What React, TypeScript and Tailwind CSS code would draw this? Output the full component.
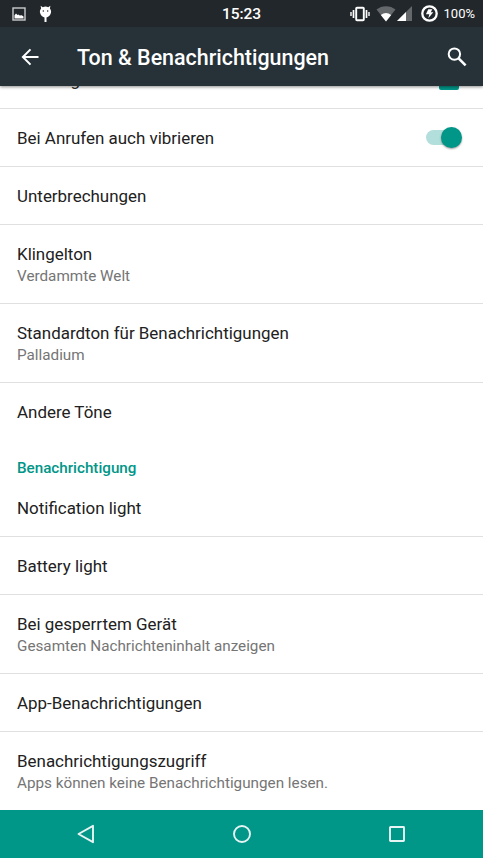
import React, { PropsWithChildren } from "react";
import clsx from "clsx";

function StatusBar() {
  return (
    <div className="grid h-[27px] grid-cols-3 items-center bg-[#22272b] text-white">
      <div className="flex items-center gap-[13px] pl-3">
        <svg width="14" height="14" viewBox="0 0 14 14">
          <rect x="1" y="1" width="12" height="12" fill="none" stroke="#c9cbcc" strokeWidth="1.4" />
          <path d="M2.5 11.5V8.2l1.5-1.7 1.5 1.6 1-.5 1.2 1 2-.4 1.8 1.3v2z" fill="#fff" />
        </svg>
        <svg width="13" height="18" viewBox="0 0 13 18">
          <path
            d="M1.6.8l2.2 1.4a6 6 0 0 1 5.4 0L11.4.8l-.5 2.6c1 1.2 1.4 2.5 1.1 4-.4 2.6-2.2 4.5-4.5 5V17h-2v-4.6C3.2 11.9 1.4 10 1 7.4c-.3-1.5.1-2.8 1.1-4z"
            fill="#fff"
          />
          <circle cx="4.3" cy="6" r=".75" fill="#22272b" />
          <circle cx="8.7" cy="6" r=".75" fill="#22272b" />
        </svg>
      </div>
      <div className="pt-[2px] text-center text-[15.5px] leading-none font-medium tracking-[-0.1px]">15:23</div>
      <div className="flex items-center justify-end pr-2">
        <svg width="20" height="16" viewBox="0 0 20 16" fill="none" stroke="#fff">
          <rect x="6.2" y="1.8" width="7.6" height="12.4" rx=".8" strokeWidth="1.9" />
          <path d="M3.5 4v8M16.5 4v8" strokeWidth="1.7" />
          <path d="M1 6v4M19 6v4" strokeWidth="1.4" />
        </svg>
        <svg className="ml-[6px]" width="20" height="16" viewBox="0 0 20 16">
          <path d="M.5 3.6a15 15 0 0 1 19 0L10 15.5z" fill="#64686b" />
          <path d="M4.8 8.9a8.5 8.5 0 0 1 10.4 0L10 15.5z" fill="#fff" />
        </svg>
        <svg className="ml-px" width="15" height="15" viewBox="0 0 15 15">
          <path d="M15 0v15H0z" fill="#64686b" />
          <path d="M9 6v9H0z" fill="#fff" />
        </svg>
        <svg className="ml-[9px]" width="17" height="17" viewBox="0 0 17 17">
          <circle cx="8.5" cy="8.5" r="7.2" fill="none" stroke="#fff" strokeWidth="2.3" />
          <path d="M7.3 4.2h4L9.8 7.2h2.5l-5 6 1-3.9H4.9z" fill="#fff" />
        </svg>
        <span className="ml-1.5 text-[13px] leading-none">100%</span>
      </div>
    </div>
  );
}

function AppBar() {
  return (
    <div className="flex h-[59px] items-center bg-[#263238] text-white">
      <svg className="ml-[21px]" width="18" height="18" viewBox="0 0 18 18" fill="none" stroke="#fff" strokeWidth="2">
        <path d="M17.5 9H2M9.5 1.4L1.9 9l7.6 7.6" />
      </svg>
      <h1 className="ml-[38px] flex-1 pt-[3px] text-[21.45px] leading-none font-medium">
        Ton &amp; Benachrichtigungen
      </h1>
      <svg className="mr-4" width="20" height="20" viewBox="0 0 20 20" fill="none" stroke="#fff">
        <circle cx="7.4" cy="7.1" r="5.7" strokeWidth="2" />
        <path d="M11.6 11.3l7 7" strokeWidth="2.5" />
      </svg>
    </div>
  );
}

function Toggle() {
  return (
    <div className="relative mt-[-1px] mr-[5px] h-[15px] w-[35px] rounded-full bg-[#b2dfdb]">
      <div className="absolute -top-[3px] -right-px size-[21px] rounded-full bg-[#009688] shadow-[0_1px_2px_rgba(0,0,0,0.4)]" />
    </div>
  );
}

type RowProps = PropsWithChildren<{
  title: string;
  summary?: string;
  last?: boolean;
}>;

function Row({ title, summary, last, children }: RowProps) {
  return (
    <div
      className={clsx(
        "flex shrink-0 items-center justify-between px-[17px]",
        summary ? "h-[79px] pt-px" : "h-[58px]",
        !last && "border-b border-[#e0e0e0]",
      )}
    >
      <div>
        <div className="text-[16.95px] leading-[22px] text-[#212121]">{title}</div>
        {summary && (
          <div className="text-[15.25px] leading-[22px] text-[#757575]">{summary}</div>
        )}
      </div>
      {children}
    </div>
  );
}

function NavBar() {
  return (
    <div className="flex h-12 items-center justify-between bg-[#009688] px-[76px]">
      <svg width="20" height="20" viewBox="0 0 20 20" fill="none" stroke="#e6f4f3" strokeWidth="1.9">
        <path d="M17 1.8v16.4L2.5 10z" strokeLinejoin="round" />
      </svg>
      <svg width="20" height="20" viewBox="0 0 20 20" fill="none" stroke="#e6f4f3" strokeWidth="1.9">
        <circle cx="10" cy="10" r="8" />
      </svg>
      <svg width="20" height="20" viewBox="0 0 20 20" fill="none" stroke="#e6f4f3" strokeWidth="1.9">
        <rect x="3" y="3" width="14" height="14" rx=".5" />
      </svg>
    </div>
  );
}

export default function App() {
  return (
    <div className="flex h-[858px] w-[483px] flex-col overflow-hidden bg-white font-['Roboto',sans-serif]">
      <div className="relative z-10 shadow-[0_1px_3px_rgba(0,0,0,0.45)]">
        <StatusBar />
        <AppBar />
      </div>
      <div className="flex-1 overflow-hidden">
        {/* list is scrolled by 35px, the first row is mostly under the app bar */}
        <div className="-mt-[35px] flex flex-col">
          <Row title="Aufsteigend">
            <div className="mr-[7px] size-5 rounded-xs bg-[#009688]" />
          </Row>
          <Row title="Bei Anrufen auch vibrieren">
            <Toggle />
          </Row>
          <Row title="Unterbrechungen" />
          <Row title="Klingelton" summary="Verdammte Welt" />
          <Row title="Standardton für Benachrichtigungen" summary="Palladium" />
          <Row title="Andere Töne" last />
          <div className="flex h-[38px] items-center px-[17px] pt-[17px] text-[15.2px] leading-none font-medium text-[#009688]">
            Benachrichtigung
          </div>
          <Row title="Notification light" />
          <Row title="Battery light" />
          <Row title="Bei gesperrtem Gerät" summary="Gesamten Nachrichteninhalt anzeigen" />
          <Row title="App-Benachrichtigungen" />
          <Row
            title="Benachrichtigungszugriff"
            summary="Apps können keine Benachrichtigungen lesen."
          />
        </div>
      </div>
      <NavBar />
    </div>
  );
}
